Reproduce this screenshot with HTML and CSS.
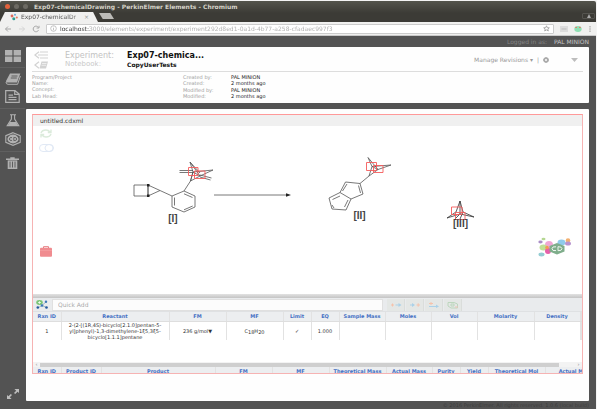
FILE: index.html
```html
<!DOCTYPE html>
<html lang="en">
<head>
<meta charset="utf-8">
<title>Exp07-chemicalDrawing - PerkinElmer Elements</title>
<link rel="stylesheet" href="styles.css">
</head>
<body>
<header class="browser">
  <div class="titlebar">
    <button class="dot close" aria-label="Close"></button>
    <button class="dot" aria-label="Minimize"></button>
    <button class="dot" aria-label="Maximize"></button>
    <span class="title">Exp07-chemicalDrawing - PerkinElmer Elements - Chromium</span>
  </div>
  <div class="tabs">
    <div class="tab">
      <svg width="8" height="8" viewBox="0 0 8 8"><circle cx="2" cy="3" r="1.4" fill="#de6a5d"/><circle cx="5" cy="1.8" r="1" fill="#6aa7d6"/><circle cx="6.8" cy="4.5" r="1.1" fill="#e57a5f"/><circle cx="3.8" cy="5.8" r="1.5" fill="#2f9c92"/></svg>
      <span class="tab-name">Exp07-chemicalDr</span>
      <button class="tab-close" aria-label="Close tab">×</button>
    </div>
    <button class="newtab" aria-label="New tab"></button>
    <button class="user" aria-label="Profile"><svg width="4" height="4" viewBox="0 0 4 4"><path d="M2 0L3 2L4 4H0L1 2Z" fill="#aaa"/></svg></button>
  </div>
  <div class="toolbar">
    <button aria-label="Back"><svg width="8" height="8" viewBox="0 0 8 8" fill="none" stroke="#a8a8a8"><path d="M7 4H1.5M4 1.5L1.5 4L4 6.5"/></svg></button>
    <button aria-label="Forward"><svg width="8" height="8" viewBox="0 0 8 8" fill="none" stroke="#d5d5d5"><path d="M1 4H6.5M4 1.5L6.5 4L4 6.5"/></svg></button>
    <button aria-label="Reload"><svg width="8" height="8" viewBox="0 0 8 8" fill="none" stroke="#a8a8a8"><path d="M6.5 5.2A2.8 2.8 0 1 1 6.4 2.5M7 .8V3H4.6"/></svg></button>
    <div class="address">
      <svg width="7" height="7" viewBox="0 0 7 7" fill="none" stroke="#aaa" stroke-width=".7"><circle cx="3.5" cy="3.5" r="2.8"/><path d="M3.5 3V5.2M3.5 1.7V2.3"/></svg>
      <input type="text" aria-label="Address" value="localhost:3000/elements/experiment/experiment292d8ed1-0a1d-4b77-a258-cfadaec997f3">
      <svg width="7" height="7" viewBox="0 0 7 7" fill="none" stroke="#999" stroke-width=".8"><path d="M3.5 .8L4.3 2.7L6.3 2.8L4.8 4L5.3 6L3.5 4.9L1.7 6L2.2 4L.7 2.8L2.7 2.7Z"/></svg>
    </div>
    <svg width="8" height="6" viewBox="0 0 8 6"><path d="M0 0H8V6H0Z" fill="#dcdcdc"/><path d="M1.5 3H6.5" stroke="#bbb"/></svg>
    <svg width="8" height="6" viewBox="0 0 8 6"><ellipse cx="4" cy="3" rx="3.7" ry="3" fill="#8fe0b4"/><path d="M1.2 1.4H3M5 1.4H6.8" stroke="#e9745f"/></svg>
    <svg width="4" height="6" viewBox="0 0 4 6" fill="#999"><path d="M1.5 0h1v1.4h-1zM1.5 2.3h1v1.4h-1zM1.5 4.6h1V6h-1z"/></svg>
  </div>
</header>

<div class="app">
  <nav class="sidebar">
    <a href="#" aria-label="Dashboard"><svg width="16" height="12" viewBox="0 0 16 12" fill="#b1b1b1"><path d="M0 0H7.4V5.5H0ZM8.6 0H16V5.5H8.6ZM0 6.5H7.4V12H0ZM8.6 6.5H16V12H8.6Z"/></svg></a>
    <a href="#" aria-label="Notebooks" class="sep"><svg width="16" height="12" viewBox="0 0 16 12"><path d="M5 .5H15.3L12 9.5H2.5Q.7 9.5 1 8Z" fill="#b1b1b1"/><path d="M1 9Q1 11.3 3 11.3H12.6L15.4 3" fill="none" stroke="#b1b1b1"/><path d="M6.5 3H12.5M5.8 5H11.8" stroke="#555" stroke-width=".9"/></svg></a>
    <a href="#" aria-label="Documents"><svg width="15" height="13" viewBox="0 0 15 13" fill="none" stroke="#b1b1b1" stroke-width="1.2"><path d="M.7 .7H10L14.2 4V12.3H.7ZM9.7 .7V4.3H14M3.5 5.2H8M3.5 7.4H11.5M3.5 9.7H11.5"/></svg></a>
    <a href="#" aria-label="Experiments" class="sep"><svg width="14" height="13" viewBox="0 0 14 13"><path d="M4 .7H10M5.4 1V5L1.2 11.8H12.8L8.6 5V1" fill="none" stroke="#b1b1b1" stroke-width="1.1"/><path d="M4 8H10L12.4 12H1.6Z" fill="#b1b1b1"/></svg></a>
    <a href="#" aria-label="ChemDraw"><svg width="16" height="14" viewBox="0 0 16 14"><path d="M8 .7L15.2 3.7V10.3L8 13.3L.8 10.3V3.7Z" fill="none" stroke="#b1b1b1" stroke-width="1.1"/><ellipse cx="8" cy="7" rx="5.6" ry="4.4" fill="#b1b1b1"/><path d="M7 5.5Q4.3 5.2 4.3 7T7 8.5M8.8 5.4V8.6Q11.8 8.7 11.8 7T8.8 5.4" fill="none" stroke="#5d5d5d" stroke-width=".9"/></svg></a>
    <a href="#" aria-label="Trash" class="sep"><svg width="13" height="12" viewBox="0 0 13 12"><path d="M0 1.5H4.3V.2H8.7V1.5H13V3H0Z" fill="#b1b1b1"/><path d="M1.7 3.4H11.3V12H1.7Z" fill="#b1b1b1"/><path d="M4 4.6V10.5M6.5 4.6V10.5M9 4.6V10.5" stroke="#555" stroke-width=".9"/></svg></a>
    <button class="expand" aria-label="Expand"><svg width="12" height="10" viewBox="0 0 12 10" fill="#bdbdbd"><path d="M7.4 0H12V4L10.6 2.8L8.2 4.9L7 3.9L9.2 1.8ZM4.6 10H0V6L1.4 7.2L3.8 5.1L5 6.1L2.8 8.2Z"/></svg></button>
  </nav>
  <main class="content">
    <div class="login">Logged in as: <b>PAL MINION</b></div>

    <section class="card summary">
      <div class="heading">
        <div class="nav-icons">
          <svg width="14" height="8" viewBox="0 0 14 8" fill="none" stroke="#d2d2d2" stroke-width="1.2"><path d="M5 .8L.9 4L5 7.2M6 1H14M4 4H14M6 7H14"/></svg>
          <svg width="14" height="8" viewBox="0 0 14 8"><path d="M5 .8L.9 4L5 7.2" fill="none" stroke="#d2d2d2" stroke-width="1.2"/><path d="M7.5 .5H14L12 7.5H5.5Z" fill="#d2d2d2"/><path d="M8 2.5H12.5M7.5 4.3H12" stroke="#fff" stroke-width=".6"/></svg>
        </div>
        <div class="names">
          <span class="exp-label">Experiment:</span><h1>Exp07-chemica...</h1>
          <span class="book-label">Notebook:</span><h2>CopyUserTests</h2>
        </div>
        <div class="actions">
          <button>Manage Revisions ▾</button><span>|</span>
          <button aria-label="Settings"><svg width="6" height="6" viewBox="0 0 6 6"><circle cx="3" cy="3" r="1.9" fill="none" stroke="#aaa" stroke-width="1.8"/><path d="M3 0V1M3 5V6M0 3H1M5 3H6" stroke="#aaa"/></svg></button>
          <button class="collapse" aria-label="Collapse"><svg width="7" height="4" viewBox="0 0 7 4"><path d="M0 0H7L3.5 4Z" fill="#bdbdbd"/></svg></button>
        </div>
      </div>
      <div class="meta">
        <div class="labels"><span>Program/Project<br>Name:</span><span>Concept:</span><span class="lab">Lab Head:</span></div>
        <dl>
          <dt>Created by:</dt><dd>PAL MINION</dd>
          <dt>Created:</dt><dd>2 months ago</dd>
          <dt>Modified by:</dt><dd>PAL MINION</dd>
          <dt>Modified:</dt><dd>2 months ago</dd>
        </dl>
      </div>
    </section>

    <section class="card work">
      <div class="panel">
        <div class="filename">untitled.cdxml</div>
        <div class="canvas">
          <div class="tools">
            <button aria-label="Refresh"><svg width="12" height="9" viewBox="0 0 12 9" fill="none" stroke="#dcebdc" stroke-width="1.4"><path d="M1 4Q2 1 6 1Q8.500 1 10 3M11 .5V3.500H7.800M11 5Q10 8 6 8Q3.500 8 2 6M1 8.500V5.500H4.200"/></svg></button>
            <button aria-label="Toggle"><svg width="15" height="8" viewBox="0 0 15 8" fill="none" stroke="#e1e9f5"><rect x=".5" y=".5" width="14" height="7" rx="3.500"/><ellipse cx="10" cy="4" rx="4" ry="3.500"/></svg></button>
            <button class="case" aria-label="Toolbox"><svg width="12" height="11" viewBox="0 0 12 11"><path d="M3.500 2V.7H8.500V2" fill="none" stroke="#e57b7f"/><rect y="1.800" width="12" height="9" rx="1" fill="#f08c90"/><path d="M0 4.500H12" stroke="#f6aaad" stroke-width=".5"/></svg></button>
          </div>
          <svg class="scene" viewBox="58 126 524 168" role="img" aria-label="Reaction drawing">
            <g fill="none" stroke="#555" stroke-width=".8">
              <path d="M134 185H148V196H134ZM148 185L160 190.500L148 196M148 185V196M160 190.500L172 196M184 191L195 196V207L184 212L172 207V196L184 191L190.500 181M184 193.800L192.500 197.500M192.700 206L184 209.800M174.500 205.500V197.500"/>
              <path d="M190.500 181L193 172L200 176L190.500 181L193 172L190 162L200 176L213 170L193 172M193 170.500H179.500M193 172.500H179.500M200 175L211.500 178M200 177L210.500 180M190 162L200 173"/>
              <path d="M214 195H288"/>
              <path d="M340 192.500L329 198L332 209L346 210L351 199L340 192.500L345.500 182L360 183.500L363 194L351 199M340 196L332.500 199.500M332 205L334 208M344.500 207L348 200M342.500 191L347 184M358.500 185.500L360.500 193M360 183.500L369 176"/>
              <path d="M369 176L372 166.500L378 169.500L369 176M368 157.500L372 166.500L391 165L378 169.500L368 157.500"/>
              <path d="M460 201L456 212L447 218L460 214L474 217L463 212Z" stroke="#333"/>
              <path d="M460 201V214L455 219M463 212L460 219" stroke="#333"/>
            </g>
            <path d="M147 184h2.500v2.500H147zM147 194.500h2.500v2.500H147zM291 195L286 193.300V196.700Z" fill="#222"/>
            <g fill="none" stroke="#f55b5b" stroke-width=".9">
              <path d="M188.500 167.500H198V175.500H188.500ZM194.500 171H205V178.500H194.500ZM366.500 162.500H376.500V170.500H366.500ZM373.500 165.500H383V172.500H373.500ZM451.500 207H462V214.500H451.500ZM455.500 212.500H465V219.500H455.500Z"/>
            </g>
            <g class="captions"><text x="173" y="222">[I]</text><text x="359.500" y="219">[II]</text><text x="460.500" y="227">[III]</text></g>
            <g>
              <circle cx="549" cy="245" r="4" fill="#f0a6d5"/><ellipse cx="543.500" cy="247.500" rx="4" ry="3" fill="#c0df96"/><ellipse cx="561.500" cy="242.500" rx="4" ry="3" fill="#8fcbea"/><circle cx="568" cy="240.500" r="2.300" fill="#f2b071"/><ellipse cx="568" cy="243.500" rx="3" ry="2" fill="#b894ce"/><circle cx="548" cy="251" r="3" fill="#e660aa"/><circle cx="547" cy="247.500" r="1.800" fill="#f29c52"/>
              <ellipse cx="540.500" cy="242" rx="2.200" ry="1.400" fill="#aa8ec7"/><ellipse cx="543.500" cy="239" rx="2" ry="1.300" fill="#b5d792"/><ellipse cx="541.500" cy="254.500" rx="3" ry="1.900" fill="#94cdd3"/>
              <path d="M557 243L564.500 246V251.500L557 254.500L549.500 251.500V246Z" fill="#7fad8b"/>
              <path d="M556 246.800Q552 246.200 552 248.700T556 250.600M558 246.700V250.700Q562 250.800 562 248.700T558 246.700" fill="none" stroke="#eef7ef"/>
            </g>
          </svg>
        </div>
        <div class="splitter"></div>
        <div class="quick">
          <svg width="12" height="9" viewBox="0 0 12 9"><path d="M3 3L6 5.500L10 1.800M6 5.500L2 7.800M6 5.500L10.500 7.500" stroke="#88a6b5" stroke-width=".8" fill="none"/><ellipse cx="3.500" cy="2.500" rx="3.300" ry="2.400" fill="#7cc576"/><path d="M2 2.500H5M3.500 1.200V3.800" stroke="#fff" stroke-width=".7"/><circle cx="6" cy="5.500" r="1.300" fill="#3c79b7"/><circle cx="10" cy="1.800" r="1.200" fill="#3c79b7"/><circle cx="1.800" cy="7.500" r="1.300" fill="#24599e"/><circle cx="10.500" cy="7.500" r="1.300" fill="#24599e"/></svg>
          <input type="text" aria-label="Quick Add" placeholder="Quick Add">
          <div class="quick-buttons">
            <button aria-label="Add reactant before"><svg width="12" height="6" viewBox="0 0 12 6"><path d="M1 3H4M2.500 1.500V4.500" stroke="#f5c2ab"/><path d="M5.500 3H9" stroke="#abd1e8"/><path d="M8.500 1L11.500 3L8.500 5Z" fill="#abd1e8"/></svg></button>
            <button aria-label="Add product"><svg width="12" height="6" viewBox="0 0 12 6"><path d="M1 3H4" stroke="#abd1e8"/><path d="M3 1L6 3L3 5Z" fill="#abd1e8"/><path d="M7.500 3H11M9.200 1.300V4.700" stroke="#f5c2ab"/></svg></button>
            <button aria-label="Add reagent"><svg width="12" height="6" viewBox="0 0 12 6"><path d="M1 1.500H5M3 0V3" stroke="#f5c2ab"/><path d="M1 4.500H8" stroke="#abd1e8"/><path d="M8 2.500L11 4.500L8 6Z" fill="#abd1e8"/></svg></button>
            <button aria-label="Add structure"><svg width="12" height="8" viewBox="0 0 12 8" fill="none" stroke="#bcd6bd"><path d="M1 1.500H7L10.500 3V7H4L1 5ZM4 3H7V5H4Z"/><path d="M8 6H11" stroke="#efc2b5"/></svg></button>
          </div>
        </div>
        <div class="reactants">
          <table>
            <colgroup><col class="w28"><col class="w108"><col class="w57"><col class="w57"><col class="w28"><col class="w28"><col class="w46"><col class="w46"><col class="w46"><col class="w57"><col class="w46"><col></colgroup>
            <thead><tr><th>Rxn ID</th><th>Reactant</th><th>FM</th><th>MF</th><th>Limit</th><th>EQ</th><th>Sample Mass</th><th>Moles</th><th>Vol</th><th>Molarity</th><th>Density</th><th></th></tr></thead>
            <tbody><tr><td>1</td><td>2-(2-[(1R,4S)-bicyclo[2.1.0]pentan-5-<br>yl]phenyl)-1,3-dimethylene-1ξ5,3ξ5-<br>bicyclo[1.1.1]pentane</td><td>236 g/mol▼</td><td>C<sub>18</sub>H<sub>20</sub></td><td>✓</td><td>1.000</td><td></td><td></td><td></td><td></td><td></td><td></td></tr></tbody>
          </table>
        </div>
        <div class="scrollbar"><span>‹</span><div class="track"><div class="thumb"></div></div><span>›</span></div>
        <div class="products">
          <table>
            <colgroup><col class="w28"><col class="w40"><col class="w114"><col class="w57"><col class="w57"><col class="w57"><col class="w46"><col class="w28"><col class="w28"><col class="w57"><col class="w57"></colgroup>
            <thead><tr><th>Rxn ID</th><th>Product ID</th><th>Product</th><th>FM</th><th>MF</th><th>Theoretical Mass</th><th>Actual Mass</th><th>Purity</th><th>Yield</th><th>Theoretical Mol</th><th>Actual Mol</th></tr></thead>
          </table>
        </div>
      </div>
    </section>
    <footer>© 2016 PerkinElmer. All rights reserved. 1.0.6 (local build)</footer>
  </main>
</div>
</body>
</html>
```
FILE: styles.css
```css
* { box-sizing: border-box; }
body { margin: 0; min-height: 100vh; padding: 1px 1px 0 0; display: flex; flex-direction: column; background: #f4f4f4; font: 5px/6px "DejaVu Sans", "Liberation Sans", sans-serif; color: #333; overflow-x: hidden; }
button { border: 0; padding: 0; background: none; font: inherit; color: inherit; display: flex; align-items: center; }
input { font: inherit; min-width: 0; border: 0; padding: 0; }
svg { display: block; flex: none; }

.browser { background: linear-gradient(#54544c, #3c3b36 12px); border-radius: 2px 2px 0 0; }
.titlebar { display: flex; align-items: center; gap: 4px; height: 11px; padding-left: 5px; }
.dot { width: 5px; height: 5px; border-radius: 50%; background: #6c6a63; }
.close { background: #e2623c; }
.title { margin-left: 2px; font-size: 6px; font-weight: bold; color: #d5d2c8; }
.tabs { display: flex; align-items: flex-end; height: 10px; padding-right: 1px; }
.tab { display: flex; align-items: center; gap: 3px; height: 10px; min-width: 98px; padding: 0 9px 0 10px; background: #f0f0ef; clip-path: polygon(5% 0, 95% 0, 100% 100%, 0 100%); }
.tab-name { flex: 1; font-size: 6px; color: #555; white-space: nowrap; mask-image: linear-gradient(90deg, #000 80%, #0006); }
.tab-close { font-size: 6px; color: #999; }
.newtab { width: 15px; height: 6px; margin: 0 auto 3px 1px; background: #bcbbb7; clip-path: polygon(0 0, 75% 0, 100% 100%, 25% 100%); }
.user { width: 13px; height: 6px; margin-bottom: 3px; justify-content: center; border: 1px solid #55544f; border-radius: 1px; }
.toolbar { display: flex; align-items: center; gap: 6px; height: 14px; padding: 0 4px; background: #f0f0ef; border-bottom: 1px solid #c9c9c9; }
.address { flex: 1; display: flex; align-items: center; gap: 3px; height: 10px; padding: 0 3px; background: #fff; border: 1px solid #ccc; border-radius: 1px; }
.address input { flex: 1; font-size: 6px; color: transparent; background: linear-gradient(90deg, #333 30px, #adadad 30px); -webkit-background-clip: text; background-clip: text; }

.app { flex: 1; display: flex; background: #535353; }
.sidebar { width: 25px; padding: 14px 0 10px; display: flex; flex-direction: column; align-items: center; gap: 5px; }
.sidebar a { display: flex; justify-content: center; width: 100%; }
.sidebar .sep { border-top: 1px solid #606060; padding-top: 5px; }
.expand { margin-top: auto; }
.content { flex: 1; min-width: 0; padding: 0 7px 0 1px; }
.login { height: 11px; line-height: 12px; font-size: 6px; text-align: right; color: #858585; }
.login b { margin-left: 5px; font-weight: normal; color: #c5c5c5; }
.card { background: #fefefe; border-radius: 1px; padding: 0 6px; }

.summary { height: 56px; margin-bottom: 6px; padding-top: 2px; }
.heading { display: flex; align-items: center; height: 23px; padding-bottom: 1px; border-bottom: 1px solid #ddd; }
.nav-icons { display: grid; gap: 2px; padding-left: 2px; }
.names { display: grid; grid-template-columns: 62px auto; align-items: center; margin-left: 17px; line-height: 9px; }
h1, h2 { margin: 0; color: #111; font-size: 8px; }
h2 { font-size: 6px; }
.exp-label { font-size: 8px; color: #c2c2c2; }
.book-label { font-size: 7px; color: #c9c9c9; }
.actions { display: flex; align-items: center; gap: 4px; margin-left: auto; padding-right: 5px; font-size: 6px; color: #999; }
.collapse { margin-left: 18px; }
.meta { display: grid; grid-template-columns: 151px 1fr; padding-top: 2px; color: #a0a0a0; }
.labels { display: grid; align-content: start; line-height: 6px; }
.labels .lab { padding-top: 1px; }
dl { margin: 0; display: grid; grid-template-columns: 48px 1fr; }
dd { margin: 0; color: #222; }

.work { padding-top: 5px; padding-bottom: 27px; }
.panel { border: 1px solid #f6b3b3; border-top-color: #f99; background: #fff; overflow: hidden; }
.filename { height: 11px; padding: 0 7px; font-size: 6px; line-height: 11px; background: #f0f0f0; }
.canvas { display: flex; height: 168px; }
.tools { width: 25px; padding: 3px 0 37px 1px; display: flex; flex-direction: column; gap: 6px; align-items: center; }
.case { margin-top: auto; }
.scene { flex: 1; min-width: 0; height: 168px; }
.captions { font: bold 10px "Liberation Sans", sans-serif; text-anchor: middle; fill: #444; }
.splitter { height: 4px; background: linear-gradient(#e2e2e2, #c4c4c4); }
.quick { display: flex; align-items: center; gap: 4px; height: 14px; padding: 0 3px; background: #e9ebed; border-bottom: 1px solid #dfe1e3; }
.quick input { flex: 1; height: 12px; padding: 0 5px; font-size: 6px; background: #fcfcfc; border: 1px solid #e0e0e0; }
.quick input::placeholder { color: #a9a9a9; }
.quick-buttons { display: flex; gap: 1px; padding-right: 117px; }
.quick-buttons button { width: 18px; height: 12px; justify-content: center; background: #e4e7e5; border-right: 1px solid #dadddb; }

table { width: 100%; table-layout: fixed; border-collapse: collapse; text-align: center; }
th, td { padding: 0; border-right: 1px solid #e2e2e2; white-space: nowrap; line-height: 6px; }
th { height: 9px; background: #eceef0; color: #4470c4; border-bottom: 1px solid #dedede; }
td { height: 19px; }
sub { font-size: 5px; line-height: 0; vertical-align: -1px; }
.w28 { width: 28px; }
.w40 { width: 40px; }
.w46 { width: 46px; }
.w57 { width: 57px; }
.w108 { width: 108px; }
.w114 { width: 114px; }
.reactants { height: 50px; }
.scrollbar { display: flex; align-items: center; height: 5px; background: #f3f3f3; color: #888; line-height: 5px; }
.scrollbar span { width: 7px; text-align: center; }
.track { flex: 1; }
.thumb { width: 97%; height: 4px; background: #cfcfcf; }
.products { height: 6px; overflow: hidden; }
.products table { width: 569px; }
footer { padding-top: 1px; text-align: right; color: #3c3c3c; }
```
